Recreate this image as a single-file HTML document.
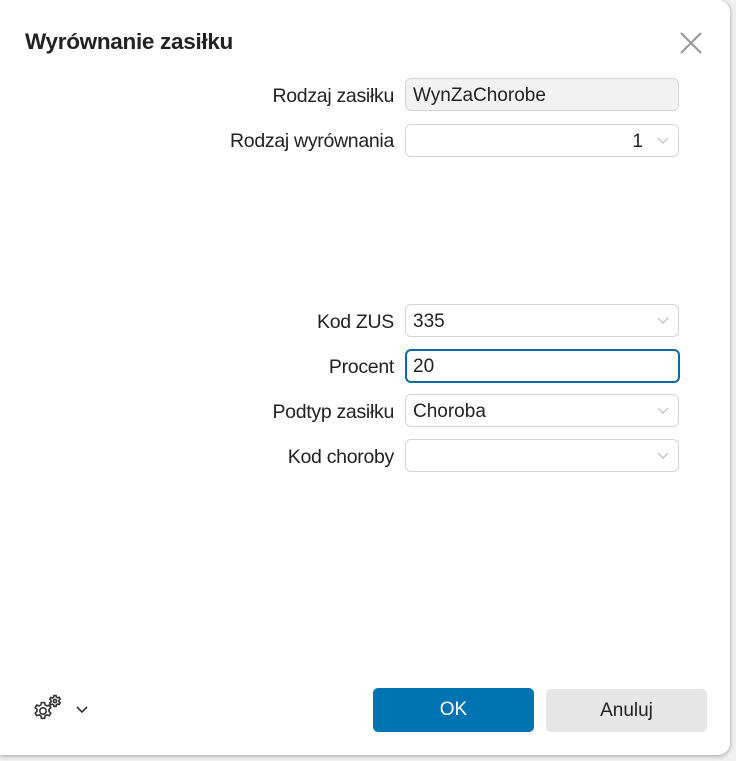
<!DOCTYPE html>
<html><head><meta charset="utf-8"><style>
body{margin:0;width:736px;height:761px;background:#f0f0f0;font-family:"Liberation Sans",sans-serif;position:relative;overflow:hidden}
.dlg{position:absolute;left:0;top:0;width:730px;height:755px;background:#fff;border-radius:0 12px 12px 0;box-shadow:0 1px 4px rgba(0,0,0,.35)}
.t{position:absolute;left:25px;top:29px;font-size:22.5px;font-weight:bold;color:#222;letter-spacing:-0.3px}
.lbl{position:absolute;right:336px;font-size:19.5px;color:#222;text-align:right;white-space:nowrap;letter-spacing:-0.3px}
.f{position:absolute;left:405px;width:272px;height:31px;border:1px solid #d4d4d4;border-radius:6px;background:#fff;font-size:19px;color:#222;box-sizing:content-box}
.f span{position:absolute;left:7px;top:6px}
.f .r{left:auto;right:35px}
.ch{position:absolute;right:9px;top:12px;width:12px;height:8px}
.ok{position:absolute;left:373px;top:688px;width:161px;height:44px;background:#0074b3;border-radius:5px;color:#fff;font-size:19px;text-align:center;line-height:44px}
.an{position:absolute;left:546px;top:689px;width:161px;height:43px;background:#e6e6e6;border-radius:5px;color:#222;font-size:19px;text-align:center;line-height:43px}
</style></head><body>
<div class="dlg">
<div class="t">Wyrównanie zasiłku</div>
<svg style="position:absolute;left:680px;top:32px" width="22" height="22"><path d="M1 1L21 21M21 1L1 21" stroke="#999" stroke-width="2.2"/></svg>

<div class="lbl" style="top:85px">Rodzaj zasiłku</div>
<div class="f" style="top:78px;background:#f2f2f2"><span>WynZaChorobe</span></div>

<div class="lbl" style="top:130px">Rodzaj wyrównania</div>
<div class="f" style="top:124px"><span class="r">1</span><svg class="ch" viewBox="0 0 12 8"><path d="M1 1L6 6L11 1" fill="none" stroke="#bbb" stroke-width="1.2"/></svg></div>

<div class="lbl" style="top:311px">Kod ZUS</div>
<div class="f" style="top:304px"><span>335</span><svg class="ch" viewBox="0 0 12 8"><path d="M1 1L6 6L11 1" fill="none" stroke="#bbb" stroke-width="1.2"/></svg></div>

<div class="lbl" style="top:356px">Procent</div>
<div class="f" style="top:349px;border:2px solid #0e6aa0;left:405px;width:271px;height:30px"><span style="left:6px;top:5px">20</span></div>

<div class="lbl" style="top:401px">Podtyp zasiłku</div>
<div class="f" style="top:394px"><span>Choroba</span><svg class="ch" viewBox="0 0 12 8"><path d="M1 1L6 6L11 1" fill="none" stroke="#bbb" stroke-width="1.2"/></svg></div>

<div class="lbl" style="top:446px">Kod choroby</div>
<div class="f" style="top:439px"><svg class="ch" viewBox="0 0 12 8"><path d="M1 1L6 6L11 1" fill="none" stroke="#bbb" stroke-width="1.2"/></svg></div>

<svg style="position:absolute;left:30px;top:693px" width="34" height="32" viewBox="0 0 34 30">
<g fill="none" stroke="#333" stroke-width="1.6">
<circle cx="13" cy="17" r="3.2"/>
<path d="M11.5 8.5h3l.6 2.4 1.8 1 2.4-.8 1.5 2.6-1.8 1.7v2l1.8 1.7-1.5 2.6-2.4-.8-1.8 1-.6 2.4h-3l-.6-2.4-1.8-1-2.4.8-1.5-2.6 1.8-1.7v-2l-1.8-1.700 1.5-2.6 2.4.8 1.8-1z"/>
<circle cx="25" cy="7" r="1.6"/>
<path d="M24 1.5h2l.4 1.6 1.3.7 1.5-.5 1 1.7-1.2 1.1v1.6l1.2 1.1-1 1.7-1.5-.5-1.3.7L26 12.5h-2l-.4-1.6-1.3-.7-1.5.5-1-1.7 1.2-1.1V6.3L19.8 5.2l1-1.7 1.5.5 1.3-.7z"/>
</g></svg>
<svg style="position:absolute;left:76px;top:706px" width="12" height="8"><path d="M1 1L6 6L11 1" fill="none" stroke="#333" stroke-width="1.6"/></svg>

<div class="ok">OK</div>
<div class="an">Anuluj</div>
</div>
</body></html>
